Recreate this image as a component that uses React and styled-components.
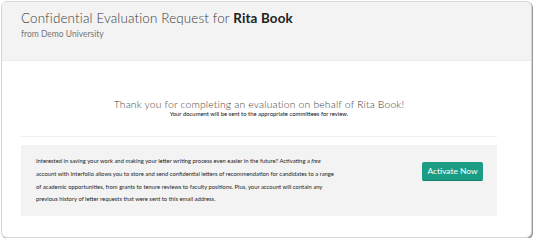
import React from "react";
import styled, { createGlobalStyle } from "styled-components";

const Global = createGlobalStyle`
  html, body { margin: 0; padding: 0; background: #fff; }
  body { font-family: "Lato", "Open Sans", sans-serif; }
  * { box-sizing: border-box; }
`;

const Page = styled.div`
  padding: 1px 1px 0 1px;
  width: 533px;
`;

const Card = styled.div`
  width: 531px;
  height: 237px;
  border: 1px solid #d6d6d6;
  border-radius: 6px;
  box-shadow: 1px 1px 1px rgba(0, 0, 0, 0.45);
  overflow: hidden;
  background: #fff;
  display: flex;
  flex-direction: column;
`;

const Header = styled.header`
  background: #f3f3f3;
  height: 59px;
  padding: 7px 19px 0;
  border-bottom: 1px solid #ececec;
`;

const Title = styled.h1`
  margin: 0;
  font-family: "Lato", sans-serif;
  font-weight: 300;
  font-size: 13.4px;
  line-height: 18px;
  color: #3a3a3a;
  letter-spacing: 0.15px;
  b {
    font-weight: 700;
    color: #222;
  }
`;

const Subtitle = styled.div`
  margin-top: 2px;
  font-size: 8.5px;
  line-height: 11px;
  color: #777;
  font-weight: 400;
`;

const Body = styled.main`
  padding: 0 34px 0 19px;
  display: flex;
  flex-direction: column;
`;

const Thanks = styled.section`
  text-align: center;
  padding: 38px 0 18px;
  border-bottom: 1px solid #eeeeee;
`;

const ThanksTitle = styled.h2`
  margin: 0;
  font-weight: 300;
  font-size: 10.4px;
  line-height: 11px;
  color: #444;
  letter-spacing: 0.15px;
`;

const ThanksText = styled.p`
  margin: 0;
  font-size: 5.9px;
  line-height: 8px;
  color: #111;
`;

const Promo = styled.section`
  margin-top: 8px;
  background: #f3f3f3;
  height: 71px;
  padding: 0 14px 0 15px;
  display: flex;
  align-items: center;
  justify-content: space-between;
`;

const PromoText = styled.p`
  margin: 0;
  font-size: 5.85px;
  line-height: 12.7px;
  color: #1e1e1e;
  white-space: nowrap;
  i { font-style: italic; }
`;

const Button = styled.button`
  width: 61px;
  height: 19px;
  border: none;
  border-radius: 2px;
  background: #1a9d84;
  border-bottom: 1px solid #147f6a;
  color: #fff;
  font-family: "Lato", sans-serif;
  font-size: 8.4px;
  font-weight: 400;
  padding: 0;
  margin-top: -18px;
  cursor: pointer;
`;

export default function App() {
  return (
    <Page>
      <Global />
      <Card>
        <Header>
          <Title>
            Confidential Evaluation Request for <b>Rita Book</b>
          </Title>
          <Subtitle>from Demo University</Subtitle>
        </Header>
        <Body>
          <Thanks>
            <ThanksTitle>Thank you for completing an evaluation on behalf of Rita Book!</ThanksTitle>
            <ThanksText>Your document will be sent to the appropriate committees for review.</ThanksText>
          </Thanks>
          <Promo>
            <PromoText>
              Interested in saving your work and making your letter writing process even easier in the future? Activating a <i>free</i>
              <br />
              account with Interfolio allows you to store and send confidential letters of recommendation for candidates to a range
              <br />
              of academic opportunities, from grants to tenure reviews to faculty positions. Plus, your account will contain any
              <br />
              previous history of letter requests that were sent to this email address.
            </PromoText>
            <Button>Activate Now</Button>
          </Promo>
        </Body>
      </Card>
    </Page>
  );
}
